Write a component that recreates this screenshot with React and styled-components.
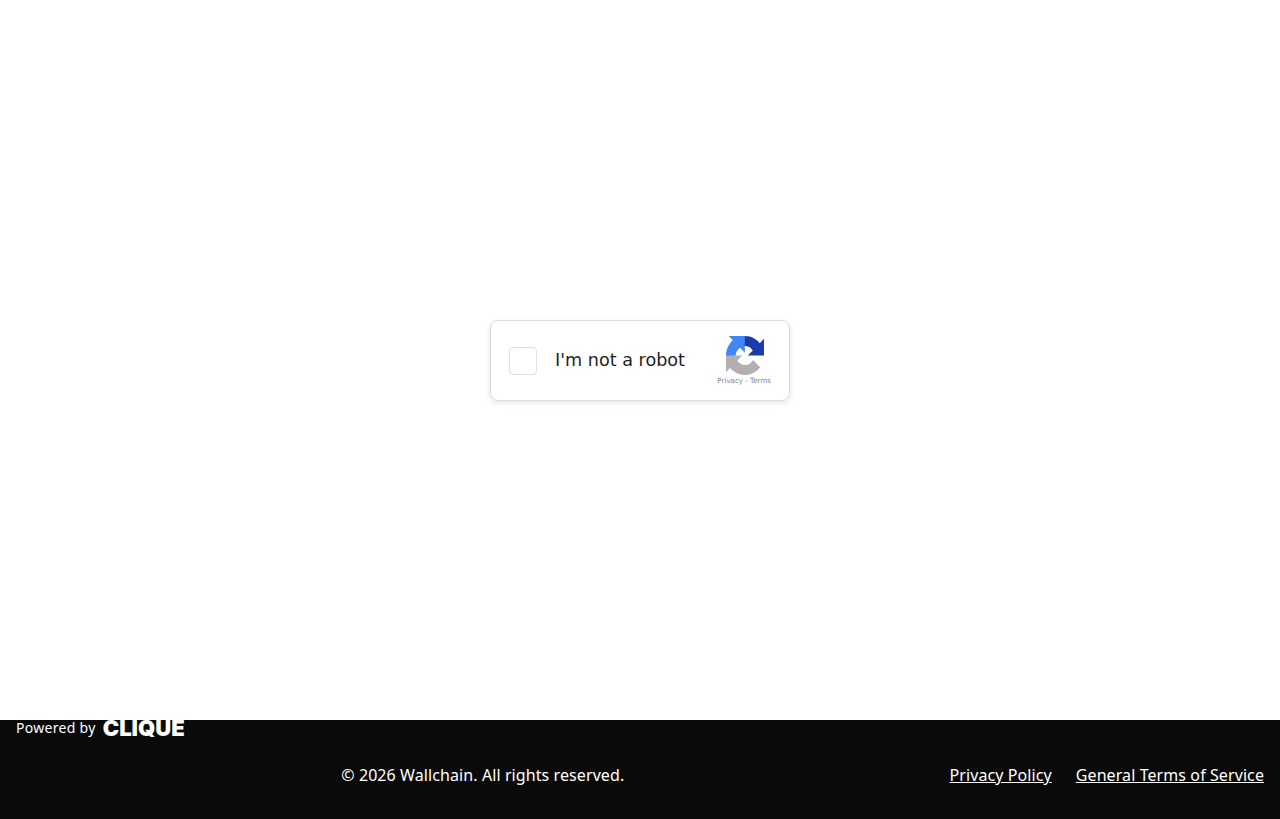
import React from 'react';
import styled, { createGlobalStyle } from 'styled-components';

const GlobalStyle = createGlobalStyle`
    html, body {
        margin: 0;
        padding: 0;
        background: #ffffff;
    }
`

const Page = styled.div`
    display: flex;
    flex-direction: column;
    height: 819px;
    overflow: hidden;
    font-family: "Noto Sans", sans-serif;
`

const Main = styled.main`
    align-items: center;
    display: flex;
    height: 720px;
    justify-content: center;
    padding-top: 1px;
    box-sizing: border-box;
`

const Captcha = styled.div`
    align-items: center;
    background: #fff;
    border: 1px solid #dcdcdc;
    border-radius: 8px;
    box-shadow: 0 2px 6px rgba(0, 0, 0, 0.1);
    box-sizing: border-box;
    display: flex;
    height: 81px;
    padding: 0 18px;
    width: 300px;
`

const Checkbox = styled.div`
    border: 1px solid #e0e0e0;
    border-radius: 4px;
    box-sizing: border-box;
    flex-shrink: 0;
    height: 28px;
    width: 28px;
`

const Label = styled.span`
    color: #1f1f1f;
    flex-grow: 1;
    font-family: "DejaVu Sans", sans-serif;
    font-size: 17.6px;
    margin-bottom: 2px;
    margin-left: 18px;
`

const Badge = styled.div`
    align-items: center;
    display: flex;
    flex-direction: column;
    margin-top: 2px;
`

const BadgeIcon = styled.svg`
    height: 39px;
    margin-left: 2px;
    width: 38px;
`

const BadgeText = styled.span`
    color: #7d8590;
    font-family: "DejaVu Sans", sans-serif;
    font-size: 7.1px;
    line-height: 12px;
    white-space: nowrap;
`

const Footer = styled.footer`
    background: #0a0a0a;
    box-sizing: border-box;
    color: #fff;
    display: flex;
    flex-direction: column;
    height: 99px;
    padding: 0 16px;
`

const Powered = styled.div`
    align-items: center;
    display: flex;
    font-size: 14px;
    gap: 7px;
    height: 17px;
`

const PoweredText = styled.span`
    letter-spacing: 0.3px;
    line-height: 15px;
    margin-bottom: 2px;
`

const CliqueMark = styled.span`
    font-family: Inter, sans-serif;
    font-size: 22px;
    font-weight: 900;
    line-height: 17px;
`

const BottomRow = styled.div`
    align-items: center;
    display: flex;
    flex-grow: 1;
    font-size: 16px;
    justify-content: space-between;
    letter-spacing: 0.09px;
    padding-bottom: 6px;
`

const Links = styled.nav`
    display: flex;
    gap: 24px;
`

const FooterLink = styled.a`
    color: #fff;
    text-decoration: underline;
`

const RecaptchaIcon = () => (
    <BadgeIcon viewBox="0 0 64 64" preserveAspectRatio="none">
        <path d="M64 31.955l-.033-1.37V4.687l-7.16 7.16C50.948 4.674 42.033.093 32.05.093c-10.4 0-19.622 4.96-25.458 12.64l11.736 11.86a15.55 15.55 0 0 1 4.754-5.334c2.05-1.6 4.952-2.906 8.968-2.906.485 0 .86.057 1.135.163 4.976.393 9.288 3.14 11.828 7.124l-8.307 8.307c10.522-.04 22.4-.066 27.295 0" fill="#1c3aa9" />
        <path d="M31.862.094l-1.37.033H4.594l7.16 7.16C4.58 13.147 0 22.06 0 32.046c0 10.4 4.96 19.622 12.64 25.458l11.86-11.736a15.55 15.55 0 0 1-5.334-4.754c-1.6-2.05-2.906-4.952-2.906-8.968 0-.485.057-.86.163-1.135.393-4.976 3.14-9.288 7.124-11.828l8.307 8.307c-.04-10.522-.066-22.4 0-27.295" fill="#4285f4" />
        <path d="M.001 32.045l.033 1.37v25.898l7.16-7.16c5.86 7.173 14.774 11.754 24.76 11.754 10.4 0 19.622-4.96 25.458-12.64L45.676 39.407a15.55 15.55 0 0 1-4.754 5.334c-2.05 1.6-4.952 2.906-8.968 2.906-.485 0-.86-.057-1.135-.163-4.976-.393-9.288-3.14-11.828-7.124l8.307-8.307c-10.522.04-22.4.066-27.295 0" fill="#b0b0b0" />
    </BadgeIcon>
)

const App = () => (
    <Page>
        <GlobalStyle />
        <Main>
            <Captcha>
                <Checkbox />
                <Label>I'm not a robot</Label>
                <Badge>
                    <RecaptchaIcon />
                    <BadgeText>Privacy - Terms</BadgeText>
                </Badge>
            </Captcha>
        </Main>
        <Footer>
            <Powered>
                <PoweredText>Powered by</PoweredText>
                <CliqueMark>CLIQUE</CliqueMark>
            </Powered>
            <BottomRow>
                <span />
                <span>© 2026 Wallchain. All rights reserved.</span>
                <Links>
                    <FooterLink href="#">Privacy Policy</FooterLink>
                    <FooterLink href="#">General Terms of Service</FooterLink>
                </Links>
            </BottomRow>
        </Footer>
    </Page>
)

export default App;
